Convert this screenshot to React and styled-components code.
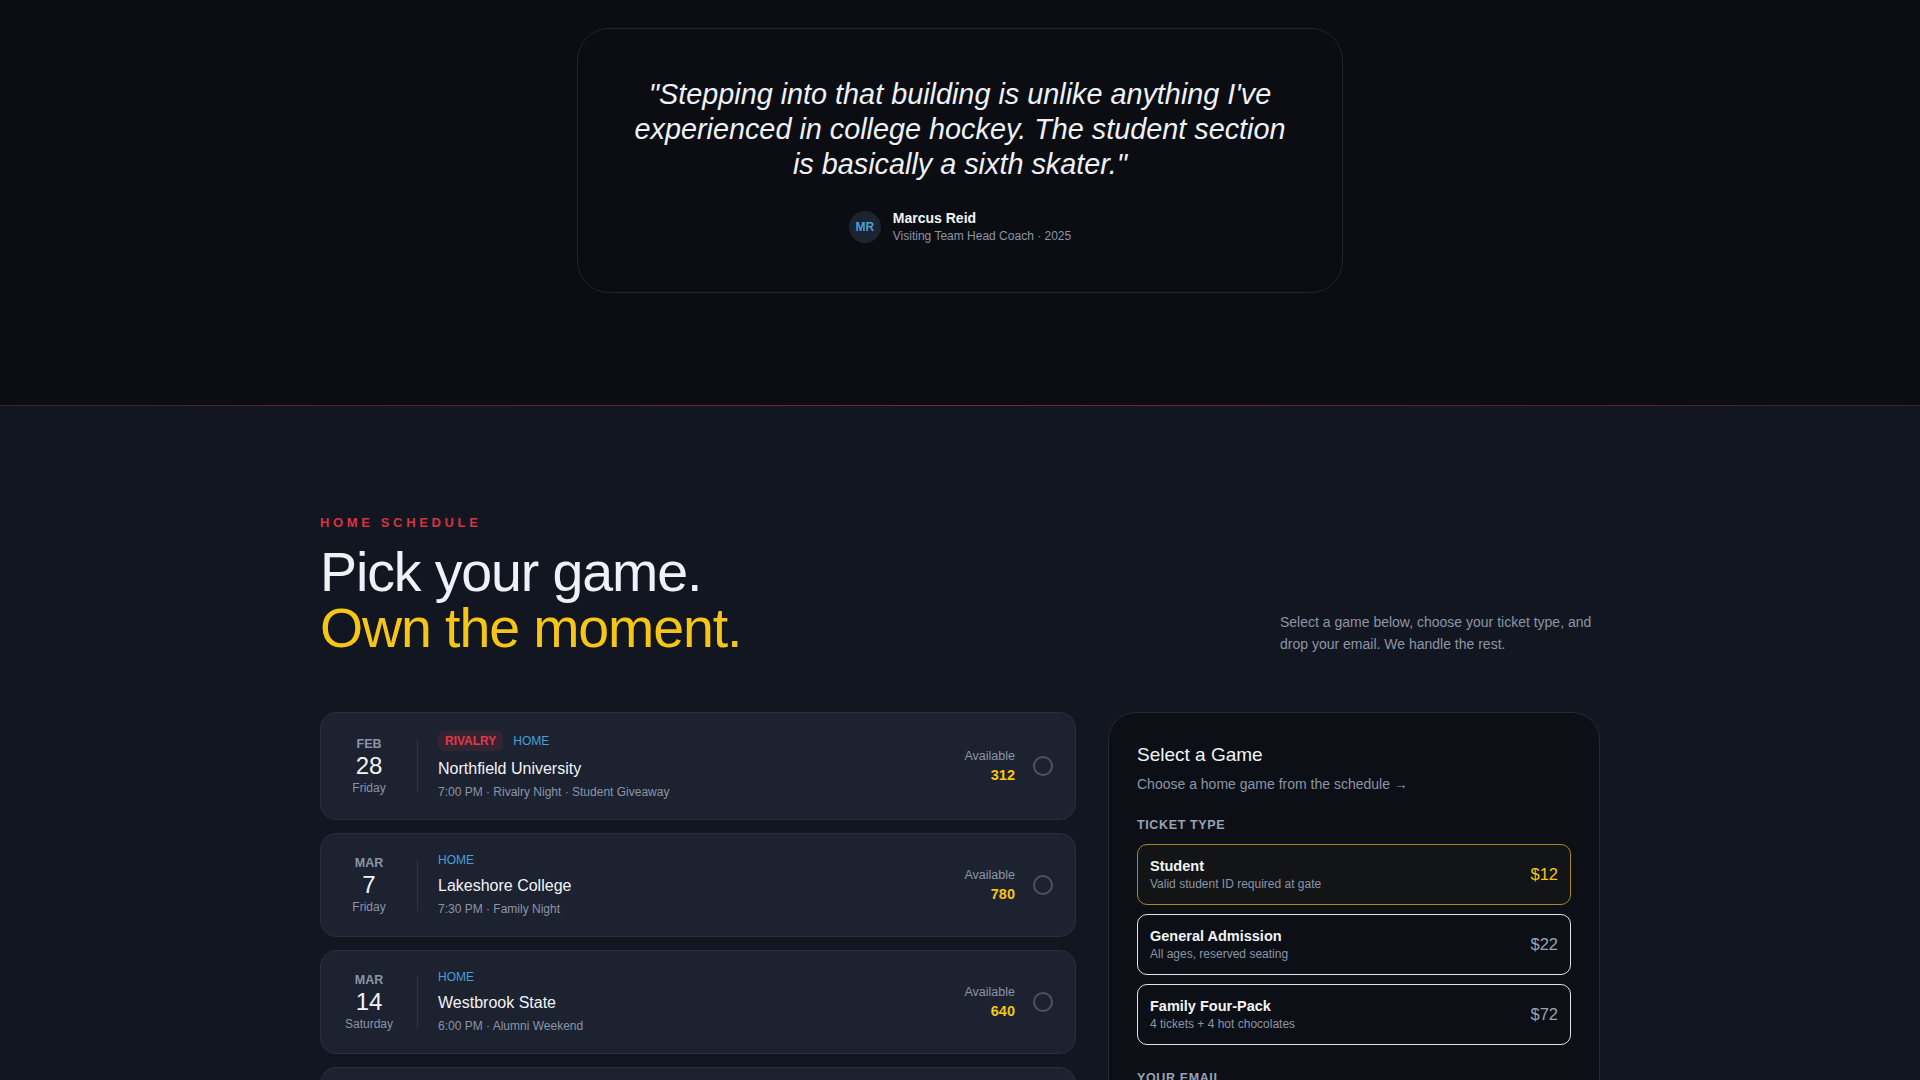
import styled, { createGlobalStyle } from "styled-components"

const GlobalStyle = createGlobalStyle`
    html { scrollbar-width:none; }
    html::-webkit-scrollbar { display:none; }
    body {
        margin:0;
        background:#121620;
        font-family:"Liberation Sans", Arial, sans-serif;
        color:#e8ecf2;
    }
    * { box-sizing:border-box; }
`

const QuoteSection = styled.section`
    background:#0b0d12;
    padding:28px 0 112px;
    display:flex;
    justify-content:center;
`
const QuoteCard = styled.div`
    width:766px;
    padding:48px 50px 49px;
    border:1px solid #1f2530;
    border-radius:32px;
    background:#0b0d12;
    display:flex;
    flex-direction:column;
    align-items:center;
`
const QuoteText = styled.p`
    margin:0;
    font-style:italic;
    font-size:28.8px;
    line-height:35px;
    text-align:center;
    color:#eef1f6;
`
const Author = styled.div`
    margin-top:28px;
    display:flex;
    align-items:center;
    gap:12px;
`
const Avatar = styled.div`
    width:32px;
    height:32px;
    border-radius:50%;
    background:#1c2331;
    color:#4a9fd8;
    font-size:12px;
    font-weight:700;
    display:flex;
    align-items:center;
    justify-content:center;
`
const AuthorName = styled.div`
    font-size:14px;
    font-weight:700;
    color:#f2f4f8;
`
const AuthorRole = styled.div`
    margin-top:3px;
    font-size:12px;
    color:#8b95a8;
`
const Divider = styled.div`
    height:1px;
    background:linear-gradient(90deg, rgba(214,51,64,.25), rgba(214,51,64,.55) 50%, rgba(214,51,64,.25));
`

const ScheduleSection = styled.section`
    background:#121620;
    padding:109px 0 80px;
`
const Container = styled.div`
    width:1280px;
    margin:0 auto;
`
const Header = styled.div`
    display:flex;
    justify-content:space-between;
    align-items:flex-end;
`
const Eyebrow = styled.div`
    font-size:13px;
    font-weight:700;
    letter-spacing:.28em;
    color:#d63340;
    margin-bottom:14px;
`
const Heading = styled.h2`
    margin:0;
    font-weight:400;
    font-size:55.5px;
    line-height:56px;
    letter-spacing:-.02em;
    color:#eef1f7;
`
const Accent = styled.span`
    display:block;
    color:#f5c518;
`
const Lead = styled.p`
    margin:0 0 1px;
    width:320px;
    font-size:14px;
    line-height:22px;
    color:#8b95a8;
`

const Grid = styled.div`
    margin-top:56px;
    display:grid;
    grid-template-columns:1fr 492px;
    gap:32px;
    align-items:start;
`
const GameList = styled.div`
    display:flex;
    flex-direction:column;
    gap:13px;
`
const GameCard = styled.div`
    display:flex;
    align-items:center;
    padding:18px 22px 18px 24px;
    background:#1c2230;
    border:1px solid #272e3d;
    border-radius:16px;
`
const DateCol = styled.div`
    width:48px;
    display:flex;
    flex-direction:column;
    align-items:center;
`
const Month = styled.div`
    font-size:12.5px;
    font-weight:700;
    color:#8b95a8;
`
const Day = styled.div`
    font-size:24px;
    line-height:30px;
    color:#f2f4f8;
`
const Weekday = styled.div`
    font-size:12px;
    color:#8b95a8;
`
const VRule = styled.div`
    width:1px;
    height:52px;
    background:#2c3344;
    margin:0 20px 0 24px;
`
const Info = styled.div`
    flex:1;
    display:flex;
    flex-direction:column;
`
const Tags = styled.div`
    display:flex;
    align-items:center;
    gap:10px;
    min-height:16px;
`
const Tag = styled.span`
    font-size:12px;
    line-height:14px;
    text-transform:uppercase;
    color:${p => (p.$red ? "#e0394a" : "#4a9fd8")};
    background:${p => (p.$red ? "rgba(214,51,64,.13)" : "transparent")};
    padding:${p => (p.$red ? "3px 7px" : "0")};
    border-radius:6px;
    font-weight:${p => (p.$red ? 700 : 400)};
`
const GameName = styled.div`
    margin-top:7px;
    font-size:16px;
    line-height:22px;
    color:#f2f4f8;
`
const Meta = styled.div`
    margin-top:4px;
    font-size:12px;
    line-height:17px;
    color:#8b95a8;
`
const Avail = styled.div`
    display:flex;
    flex-direction:column;
    align-items:flex-end;
    gap:4px;
`
const AvailLabel = styled.div`
    font-size:12.5px;
    color:#8b95a8;
`
const AvailCount = styled.div`
    font-size:14.5px;
    font-weight:700;
    color:#f5c518;
`
const Radio = styled.div`
    width:20px;
    height:20px;
    margin-left:18px;
    border-radius:50%;
    border:2px solid #4a5366;
`

const Panel = styled.div`
    background:#0c0f15;
    border:1px solid #232a38;
    border-radius:28px;
    padding:31px 28px 32px;
`
const PanelTitle = styled.div`
    font-size:19px;
    color:#f2f4f8;
`
const PanelSub = styled.div`
    margin-top:10px;
    font-size:14px;
    color:#8b95a8;
`
const Label = styled.div`
    margin:26px 0 12px;
    font-size:12.5px;
    font-weight:700;
    letter-spacing:.05em;
    color:#9aa3b5;
`
const Options = styled.div`
    display:flex;
    flex-direction:column;
    gap:9px;
`
const Option = styled.div`
    height:61px;
    padding:0 12px;
    border-radius:10px;
    border:1px solid ${p => (p.$active ? "#a8862a" : "#dfe3ea")};
    background:${p => (p.$active ? "rgba(245,197,24,.03)" : "transparent")};
    display:flex;
    align-items:center;
    justify-content:space-between;
`
const OptTitle = styled.div`
    font-size:14.5px;
    font-weight:700;
    color:#f2f4f8;
`
const OptSub = styled.div`
    margin-top:3px;
    font-size:12px;
    color:#8b95a8;
`
const Price = styled.div`
    font-size:16.5px;
    color:${p => (p.$active ? "#f5c518" : "#9aa3b5")};
`
const EmailInput = styled.input`
    width:100%;
    height:48px;
    padding:0 14px;
    border-radius:10px;
    border:1px solid #2a3142;
    background:#141925;
    color:#e8ecf2;
    font:14px "Liberation Sans", Arial, sans-serif;
`

const games = [
    { m: "FEB", d: 28, w: "Friday", tags: ["rivalry", "home"], name: "Northfield University", meta: "7:00 PM · Rivalry Night · Student Giveaway", n: 312 },
    { m: "MAR", d: 7, w: "Friday", tags: ["home"], name: "Lakeshore College", meta: "7:30 PM · Family Night", n: 780 },
    { m: "MAR", d: 14, w: "Saturday", tags: ["home"], name: "Westbrook State", meta: "6:00 PM · Alumni Weekend", n: 640 },
    { m: "MAR", d: 21, w: "Friday", tags: ["home"], name: "Pine Ridge Tech", meta: "7:00 PM · Senior Night", n: 455 },
]

const tickets = [
    { t: "Student", s: "Valid student ID required at gate", p: "$12", active: true },
    { t: "General Admission", s: "All ages, reserved seating", p: "$22" },
    { t: "Family Four-Pack", s: "4 tickets + 4 hot chocolates", p: "$72" },
]

const App = () => {
  return (
    <>
        <GlobalStyle />
        <QuoteSection>
            <QuoteCard>
                <QuoteText>
                    "Stepping into that building is unlike anything I've experienced in college hockey. The student section is basically a sixth skater."
                </QuoteText>
                <Author>
                    <Avatar>MR</Avatar>
                    <div>
                        <AuthorName>Marcus Reid</AuthorName>
                        <AuthorRole>Visiting Team Head Coach · 2025</AuthorRole>
                    </div>
                </Author>
            </QuoteCard>
        </QuoteSection>
        <Divider />
        <ScheduleSection>
            <Container>
                <Header>
                    <div>
                        <Eyebrow>HOME SCHEDULE</Eyebrow>
                        <Heading>
                            Pick your game.
                            <Accent>Own the moment.</Accent>
                        </Heading>
                    </div>
                    <Lead>Select a game below, choose your ticket type, and drop your email. We handle the rest.</Lead>
                </Header>
                <Grid>
                    <GameList>
                        {games.map(g => (
                            <GameCard key={g.name}>
                                <DateCol>
                                    <Month>{g.m}</Month>
                                    <Day>{g.d}</Day>
                                    <Weekday>{g.w}</Weekday>
                                </DateCol>
                                <VRule />
                                <Info>
                                    <Tags>
                                        {g.tags.map(t => (
                                            <Tag key={t} $red={t === "rivalry"}>{t}</Tag>
                                        ))}
                                    </Tags>
                                    <GameName>{g.name}</GameName>
                                    <Meta>{g.meta}</Meta>
                                </Info>
                                <Avail>
                                    <AvailLabel>Available</AvailLabel>
                                    <AvailCount>{g.n}</AvailCount>
                                </Avail>
                                <Radio />
                            </GameCard>
                        ))}
                    </GameList>
                    <Panel>
                        <PanelTitle>Select a Game</PanelTitle>
                        <PanelSub>Choose a home game from the schedule →</PanelSub>
                        <Label>TICKET TYPE</Label>
                        <Options>
                            {tickets.map(t => (
                                <Option key={t.t} $active={t.active}>
                                    <div>
                                        <OptTitle>{t.t}</OptTitle>
                                        <OptSub>{t.s}</OptSub>
                                    </div>
                                    <Price $active={t.active}>{t.p}</Price>
                                </Option>
                            ))}
                        </Options>
                        <Label>YOUR EMAIL</Label>
                        <EmailInput placeholder="you@university.edu" />
                    </Panel>
                </Grid>
            </Container>
        </ScheduleSection>
    </>
  )
}

export default App
